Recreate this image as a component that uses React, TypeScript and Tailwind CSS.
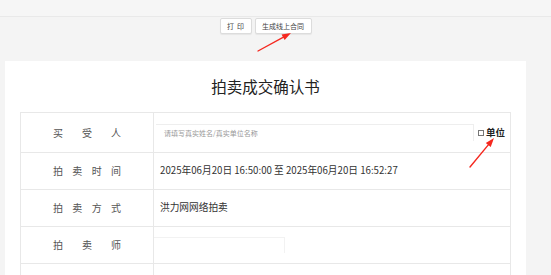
import React from "react";

const font = { fontFamily: '"Noto Sans CJK SC", "Noto Sans", sans-serif' };

function Arrow({ x1, y1, x2, y2 }: { x1: number; y1: number; x2: number; y2: number }) {
  const dx = x2 - x1;
  const dy = y2 - y1;
  const len = Math.sqrt(dx * dx + dy * dy);
  const ux = dx / len;
  const uy = dy / len;
  const hl = 9;
  const hw = 3.2;
  const bx = x2 - ux * hl;
  const by = y2 - uy * hl;
  const p1 = `${x2},${y2}`;
  const p2 = `${bx - uy * hw},${by + ux * hw}`;
  const p3 = `${bx + uy * hw},${by - ux * hw}`;
  return (
    <g>
      <line x1={x1} y1={y1} x2={bx + ux * 2} y2={by + uy * 2} stroke="#f5281f" strokeWidth={1.4} strokeLinecap="round" />
      <polygon points={`${p1} ${p2} ${p3}`} fill="#f5281f" />
    </g>
  );
}

function Label({ text }: { text: string }) {
  return (
    <div className="w-[133px] shrink-0 border-r border-[#e8e8e8] flex items-center justify-center">
      <div
        className="w-[68px] text-[10px] text-[#555] leading-none"
        style={{ textAlign: "justify", textAlignLast: "justify" }}
      >
        {text.split("").join(" ")}
      </div>
    </div>
  );
}

export default function App() {
  return (
    <div className="relative w-[551px] h-[275px] overflow-hidden bg-[#f4f4f4]" style={font}>
      <div className="h-[17px] bg-[#f6f6f6] border-b border-[#e9e9e9]" />
      <div className="w-[521px] ml-[5px] flex justify-center gap-[3px] mt-[1px]">
        <button className="h-[16px] w-[32px] bg-white border border-[#dcdcdc] rounded-[2px] shadow-[0_1px_1px_rgba(0,0,0,0.06)] text-[7px] text-[#444] leading-none flex items-center justify-center">
          打&nbsp;&nbsp;印
        </button>
        <button className="h-[16px] w-[57px] bg-white border border-[#dcdcdc] rounded-[2px] shadow-[0_1px_1px_rgba(0,0,0,0.06)] text-[7px] text-[#444] leading-none flex items-center justify-center">
          生成线上合同
        </button>
      </div>
      <div className="w-[521px] ml-[5px] mt-[27px] bg-white px-[15px] pb-4">
        <div className="h-[51px] flex items-center justify-center text-[15.5px] text-[#222] leading-none">
          拍卖成交确认书
        </div>
        <div className="border-l border-r border-t border-[#e8e8e8]">
          <div className="flex h-[40px] border-b border-[#e8e8e8]">
            <Label text="买受人" />
            <div className="flex-1 flex items-center pl-[2px] pr-[5px]">
              <div className="w-[318px] h-[17px] border-t border-r border-[#eeeeee] flex items-center pl-[8px] text-[7px] text-[#999] leading-none">
                请填写真实姓名/真实单位名称
              </div>
              <div className="flex-1" />
              <div className="flex items-center gap-[2px]">
                <div className="w-[6px] h-[6px] border border-[#777] bg-white" />
                <span className="text-[9.5px] font-bold text-[#222] leading-none">单位</span>
              </div>
            </div>
          </div>
          <div className="flex h-[37px] border-b border-[#e8e8e8]">
            <Label text="拍卖时间" />
            <div className="flex-1 flex items-center pl-[6px] text-[9.7px] text-[#333] leading-none">
              2025年06月20日 16:50:00 至 2025年06月20日 16:52:27
            </div>
          </div>
          <div className="flex h-[37px] border-b border-[#e8e8e8]">
            <Label text="拍卖方式" />
            <div className="flex-1 flex items-center pl-[6px] text-[9.7px] text-[#333] leading-none">
              洪力网网络拍卖
            </div>
          </div>
          <div className="flex h-[37px] border-b border-[#e8e8e8]">
            <Label text="拍卖师" />
            <div className="flex-1 flex items-center">
              <div className="w-[131px] h-[16px] border-t border-r border-[#f2f2f2]" />
            </div>
          </div>
          <div className="flex h-[37px] border-b border-[#e8e8e8]">
            <div className="w-[133px] shrink-0 border-r border-[#e8e8e8]" />
            <div className="flex-1" />
          </div>
        </div>
      </div>
      <svg className="absolute left-0 top-0 pointer-events-none" width={551} height={275}>
        <Arrow x1={258} y1={51} x2={291} y2={33} />
        <Arrow x1={470} y1={167} x2={494} y2={138} />
      </svg>
    </div>
  );
}
